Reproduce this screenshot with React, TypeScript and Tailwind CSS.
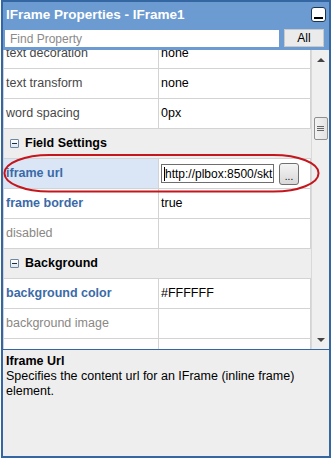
import React from 'react';

type Row =
  | { kind: 'prop'; label: string; value?: string; tone: 'plain' | 'key' | 'muted'; selected?: boolean; editor?: boolean }
  | { kind: 'group'; label: string };

const rows: Row[] = [
  { kind: 'prop', label: 'text decoration', value: 'none', tone: 'plain' },
  { kind: 'prop', label: 'text transform', value: 'none', tone: 'plain' },
  { kind: 'prop', label: 'word spacing', value: '0px', tone: 'plain' },
  { kind: 'group', label: 'Field Settings' },
  { kind: 'prop', label: 'iframe url', tone: 'key', selected: true, editor: true },
  { kind: 'prop', label: 'frame border', value: 'true', tone: 'key' },
  { kind: 'prop', label: 'disabled', tone: 'muted' },
  { kind: 'group', label: 'Background' },
  { kind: 'prop', label: 'background color', value: '#FFFFFF', tone: 'key' },
  { kind: 'prop', label: 'background image', tone: 'muted' },
  { kind: 'prop', label: '', tone: 'plain' },
];

const toneClass = {
  plain: 'text-[#474747]',
  key: 'font-bold text-[#3b6aa8]',
  muted: 'text-[#8a8784]',
};

function CollapseIcon() {
  return (
    <div className="w-[9px] h-[9px] border border-[#6f86a3] rounded-[1px] bg-gradient-to-b from-white to-[#dfe6ee] flex items-center justify-center">
      <div className="w-[5px] h-[1px] bg-[#1c2c40]" />
    </div>
  );
}

export default function App() {
  return (
    <div className="w-[332px] h-[458px] bg-white" style={{ fontFamily: '"Liberation Sans", Arial, sans-serif' }}>
      <div className="ml-[1px] w-[330px] h-[458px] border-2 border-[#3467a1] bg-[#6b9bd1] flex flex-col">
        {/* Header */}
        <div className="h-[26px] flex items-start justify-between pl-[3px] pr-[3px]">
          <div className="mt-[5px] text-[13.5px] leading-[16px] font-bold text-white">IFrame Properties - IFrame1</div>
          <div className="mt-[5px] w-[15px] h-[15px] rounded-[3px] border border-[#1c3552] bg-white flex items-end justify-center pb-[2px]">
            <div className="w-[9px] h-[2px] bg-black" />
          </div>
        </div>
        <div className="h-[22px] flex items-start pl-[2px]">
          <div className="mt-[2px] w-[274px] h-[17px] bg-white flex items-center pl-[5px] text-[12px] text-[#8a8a8a]">
            Find Property
          </div>
          <div className="ml-[5px] mt-[1px] w-[40px] h-[18px] bg-[#ebebeb] border border-[#c9c9c9] flex items-center justify-center text-[12px] text-black">
            All
          </div>
        </div>

        {/* Property grid */}
        <div className="relative h-[299px] flex bg-[#eeeeee] overflow-hidden">
          <div className="w-[308px] overflow-hidden">
            <div className="-mt-[11px]">
              {rows.map((r, i) =>
                r.kind === 'group' ? (
                  <div key={i} className="h-[30px] border-l border-b border-[#d3d3d3] bg-[#eeeeee] flex items-center pl-[6px] gap-[6px]">
                    <CollapseIcon />
                    <span className="text-[12.5px] font-bold text-black">{r.label}</span>
                  </div>
                ) : (
                  <div key={i} className="h-[30px] flex border-b border-[#d3d3d3] text-[12.5px]">
                    <div
                      className={`w-[156px] border-l border-r border-[#d3d3d3] flex items-center pl-[2px] ${
                        r.selected ? 'bg-[#dae6f6]' : 'bg-white'
                      } ${toneClass[r.tone]}`}
                    >
                      {r.label}
                    </div>
                    <div className="w-[152px] border-r border-[#d3d3d3] bg-white flex items-center pl-[2px] text-black">
                      {r.editor ? (
                        <div className="flex items-center gap-[5px]">
                          <div className="relative w-[113px] h-[19px] border border-[#6e6e6e] bg-white overflow-hidden flex items-center pl-[3px] text-[12px] whitespace-nowrap">
                            <div className="absolute left-[2px] top-[2px] w-[1px] h-[14px] bg-black" />
                            http://plbox:8500/skt
                          </div>
                          <div className="w-[20px] h-[22px] rounded-[3px] border border-[#707070] bg-gradient-to-b from-[#f4f4f4] to-[#d9d9d9] flex items-end justify-center pb-[3px] text-[10px] leading-[8px] text-black">
                            ...
                          </div>
                        </div>
                      ) : (
                        r.value
                      )}
                    </div>
                  </div>
                )
              )}
            </div>
          </div>

          {/* Scrollbar */}
          <div className="w-[18px] border-l border-[#d9d9d9] bg-[#efefef] flex flex-col items-center">
            <div className="mt-[8px] w-0 h-0 border-l-[4px] border-r-[4px] border-b-[4px] border-l-transparent border-r-transparent border-b-[#444]" />
            <div className="mt-[55px] w-[14px] h-[23px] rounded-[2px] border border-[#8f8f8f] bg-gradient-to-r from-[#f3f3f3] to-[#e2e2e2] flex flex-col items-center justify-center gap-[1px]">
              <div className="w-[7px] h-[1px] bg-[#666]" />
              <div className="w-[7px] h-[1px] bg-[#666]" />
              <div className="w-[7px] h-[1px] bg-[#666]" />
            </div>
            <div className="mt-auto mb-[7px] w-0 h-0 border-l-[4px] border-r-[4px] border-t-[4px] border-l-transparent border-r-transparent border-t-[#444]" />
          </div>

          {/* Highlight around the selected row */}
          <svg className="absolute left-0 top-0 pointer-events-none" width="330" height="299">
            <rect x="1.5" y="105" width="314" height="36.5" rx="45" ry="18" fill="none" stroke="#c4161c" strokeWidth="2" />
          </svg>
        </div>

        {/* Description */}
        <div className="flex-1 border-t border-[#3467a1] bg-[#eeeeee] pl-[3px] pt-[4px] text-[12.5px] leading-[15px] text-black">
          <div className="font-bold">Iframe Url</div>
          <div className="pr-[30px]">Specifies the content url for an IFrame (inline frame) element.</div>
        </div>
      </div>
    </div>
  );
}
